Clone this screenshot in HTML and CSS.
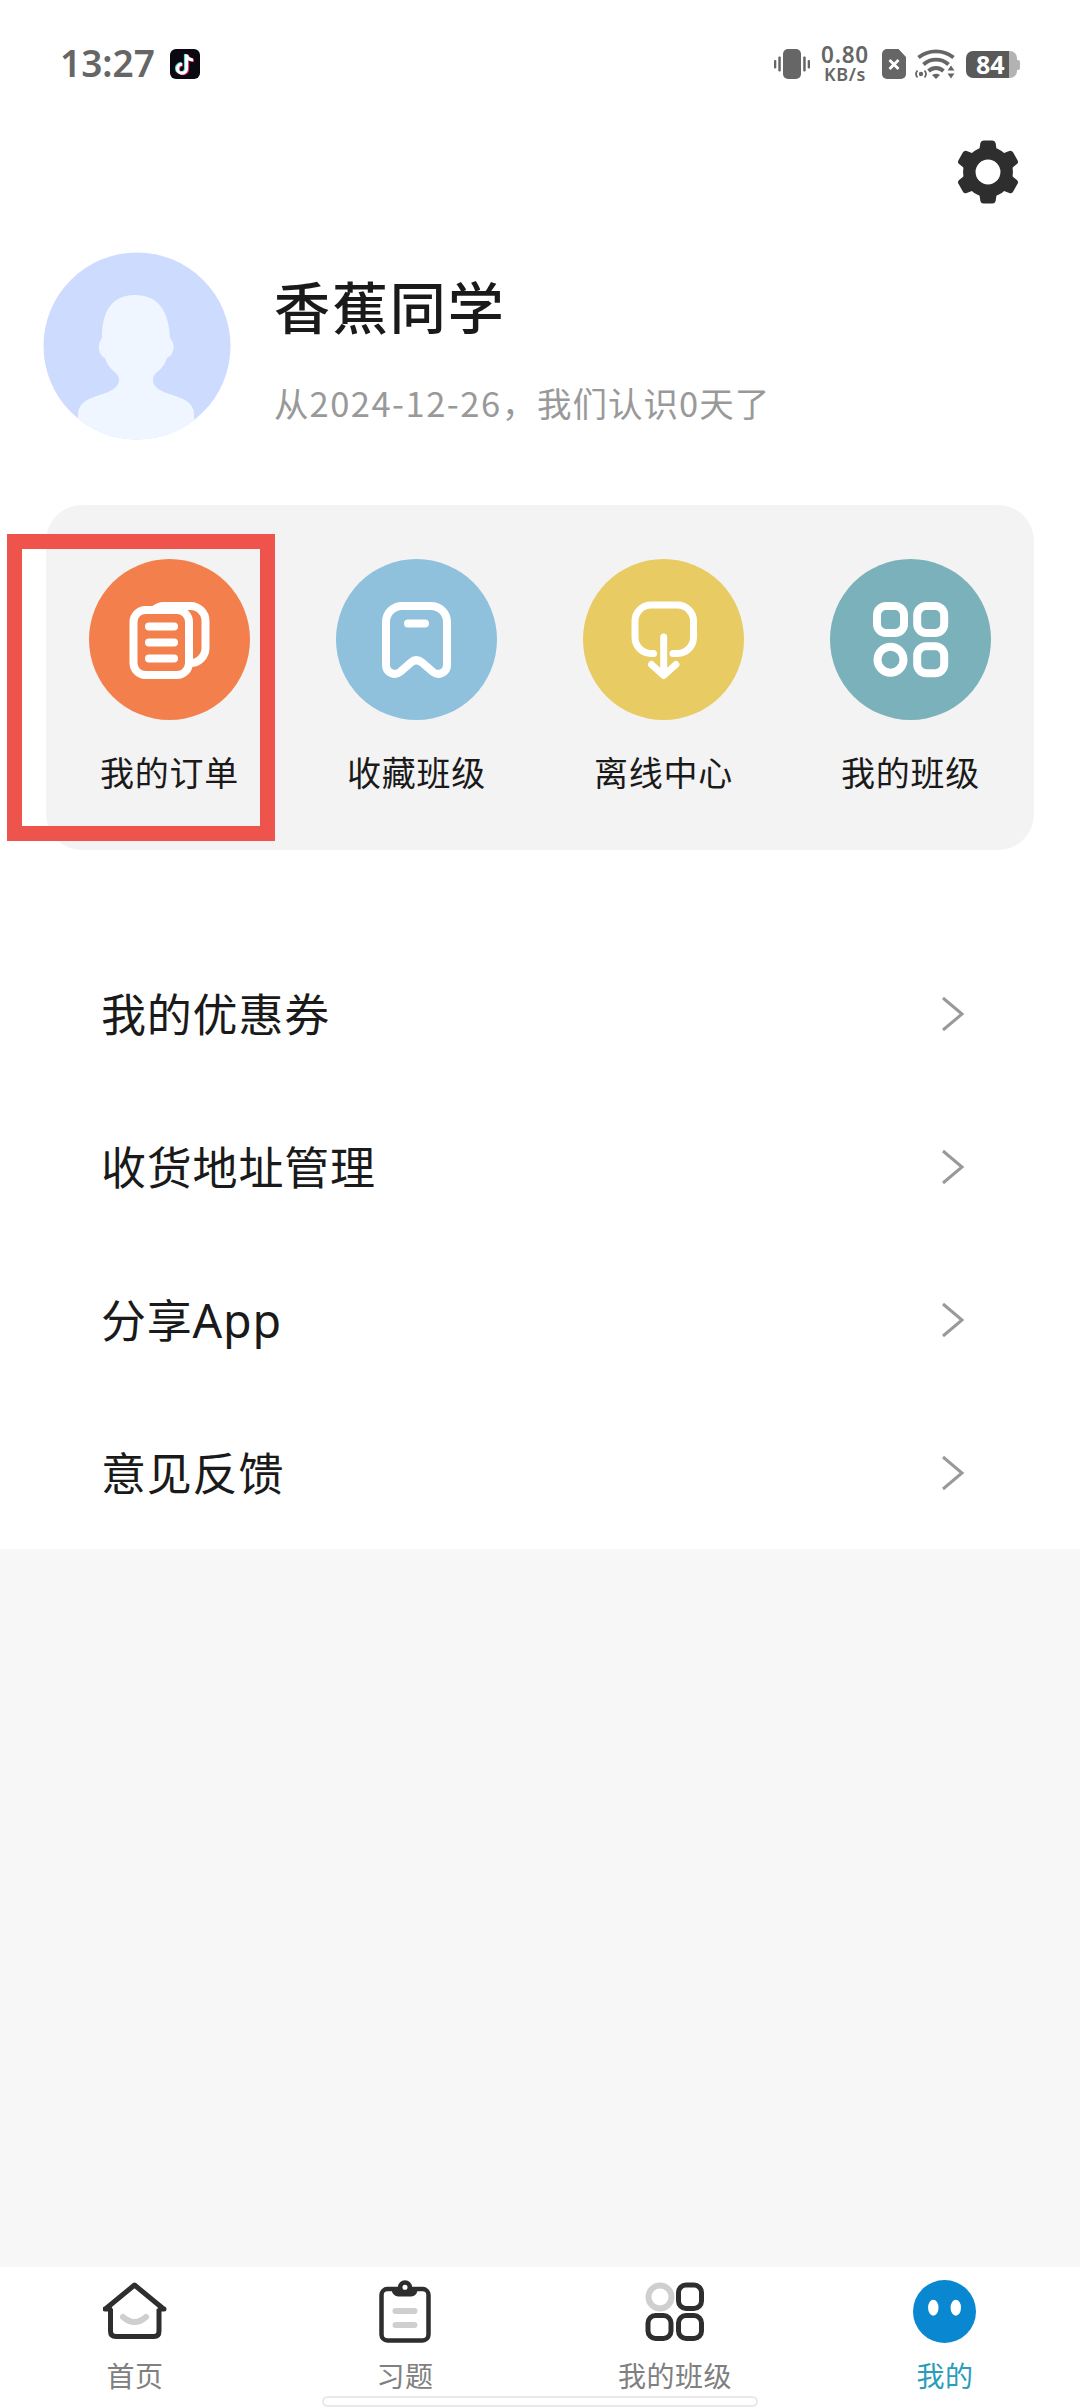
FILE: index.html
```html
<!DOCTYPE html>
<html lang="zh-CN">
<head>
<meta charset="utf-8">
<title>我的</title>
<link rel="stylesheet" href="styles.css">
</head>
<body>
<header class="status">
  <span class="clock">13:27</span>
  <svg class="app-badge" width="30" height="30" viewBox="0 0 30 30"><rect width="30" height="30" rx="6" fill="#0b0812"/><g fill="none" stroke-width="3.200"><path d="M15.500 5v14.200a4.500 4.500 0 1 1-4.500-4.500M15.500 5.500c.5 3 3 4.800 6.500 5" stroke="#2de5e2"/><path d="M17.500 6v14.200a4.500 4.500 0 1 1-4.500-4.500M17.500 6.500c.5 3 3 4.800 6.500 5" stroke="#f52b56"/><path d="M16.500 5.500v14.200a4.500 4.500 0 1 1-4.500-4.500M16.500 6c.5 3 3 4.800 6.500 5" stroke="#fff"/></g></svg>
  <div class="status-icons">
    <svg class="vibrate" width="36" height="30" viewBox="0 0 36 30" fill="#666"><rect x="9" width="18" height="30" rx="5"/><rect y="11" width="2.300" height="8.500" rx="1"/><rect x="4.300" y="7.500" width="2.500" height="15" rx="1"/><rect x="29.200" y="7.500" width="2.500" height="15" rx="1"/><rect x="33.700" y="11" width="2.300" height="8.500" rx="1"/></svg>
    <div class="speed"><span class="rate">0.80</span><span class="unit">KB/s</span></div>
    <svg class="sim" width="24" height="30" viewBox="0 0 24 30"><path d="M5 0h11.500L24 8v17a5 5 0 0 1-5 5H5a5 5 0 0 1-5-5V5a5 5 0 0 1 5-5z" fill="#666"/><path d="M7.500 11l9 9m0-9l-9 9" stroke="#fff" stroke-width="2.800"/></svg>
    <svg class="wifi" width="40" height="30" viewBox="0 0 40 30"><g fill="none" stroke="#666" stroke-width="3.800"><path d="M3.500 8.500c10-8.200 25-8.200 35 0"/><path d="M8.500 15.500c7-6.500 18-6.500 25 0"/><path d="M13.500 22c4.500-4 10.500-4 15 0"/></g><path d="M17 26q4.500-2.500 8 0l-4 4z" fill="#666"/><circle cx="6" cy="25" r="2.200" fill="#666"/><path d="M2.500 21.500q-3 3.500 0 7M9.500 21.500q3 3.500 0 7" fill="none" stroke="#666" stroke-width="1.800"/><path d="M32 23l4-8 4 8v7h-8z" fill="#fff"/><path d="M32.500 21.500l3.500-5 3.500 5zM32.500 24.500h7l-3.500 5z" fill="#666"/></svg>
    <div class="battery">84</div>
  </div>
</header>

<main class="profile">
  <div class="toolbar">
    <svg class="gear" width="60" height="64" viewBox="-30 -32 60 64"><g fill="#2e2e2e"><path id="tooth" d="M-9-20L-7.600-29Q-7-31.500-4.500-31.500h9Q7-31.500 7.600-29L9-20z"/><use href="#tooth" transform="rotate(60)"/><use href="#tooth" transform="rotate(120)"/><use href="#tooth" transform="rotate(180)"/><use href="#tooth" transform="rotate(240)"/><use href="#tooth" transform="rotate(300)"/></g><circle r="18.700" fill="none" stroke="#2e2e2e" stroke-width="12.500"/></svg>
  </div>

  <section class="user">
    <svg class="avatar" width="188" height="188" viewBox="0 0 188 188"><defs><clipPath id="disc"><circle cx="94" cy="94" r="93.500"/></clipPath></defs><circle cx="94" cy="94" r="93.500" fill="#cddbff"/><path clip-path="url(#disc)" fill="#f0f6ff" d="M35 190v-28c0-6 4-12 12-15.500 10-4.500 29-7 29-18.500 0-9-9-7-14-22-7-3-8-14-3-20 0-27 10-43 33-43s34 16 35 43c6 6 4 17-3 20-5 15-14 13-14 22 0 11.500 19 14 29 18.500 8 3.500 12 9.500 12 15.500v28z"/></svg>
    <div class="user-text">
      <h1 class="name">香蕉同学</h1>
      <p class="since">从<span class="date">2024-12-26</span>，我们认识0天了</p>
    </div>
  </section>

  <section class="actions">
    <a class="action highlighted">
      <svg class="disc orange" viewBox="0 0 161 161"><rect x="60" y="47" width="56.500" height="57" rx="15"/><rect class="cover" x="44.500" y="51" width="55.500" height="65" rx="12"/><path d="M60 67.500h25M60 83.500h25M60 99.500h25"/></svg>
      <span class="label">我的订单</span>
    </a>
    <a class="action">
      <svg class="disc blue" viewBox="0 0 161 161"><path d="M65 47h30a16 16 0 0 1 16 16v43c0 8-9 11-14 7l-11-9.500q-6-4.500-11 0L64 113c-5 4-14 1-14-7V63a16 16 0 0 1 16-16M72 64.500h17"/></svg>
      <span class="label">收藏班级</span>
    </a>
    <a class="action">
      <svg class="disc yellow" viewBox="0 0 161 161"><path d="M70.500 94.500H68a16 16 0 0 1-16-16V62a16 16 0 0 1 16-16h26.500a16 16 0 0 1 16 16v16.500a16 16 0 0 1-16 16H90M80.700 78v38M68.500 105.500l12.200 11 12.200-11" stroke-width="7"/></svg>
      <span class="label">离线中心</span>
    </a>
    <a class="action">
      <svg class="disc teal" viewBox="0 0 161 161"><rect x="47" y="47" width="27" height="27" rx="9"/><rect x="87.200" y="47" width="27" height="27" rx="9"/><circle cx="60.500" cy="100.700" r="13"/><rect x="87.200" y="87.200" width="27" height="27" rx="9"/></svg>
      <span class="label">我的班级</span>
    </a>
  </section>

  <nav class="menu">
    <a class="row"><span class="title">我的优惠券</span><svg class="chevron" viewBox="0 0 24 38"><path d="M2 3l19 16L2 35"/></svg></a>
    <a class="row"><span class="title">收货地址管理</span><svg class="chevron" viewBox="0 0 24 38"><path d="M2 3l19 16L2 35"/></svg></a>
    <a class="row"><span class="title">分享<span class="latin">App</span></span><svg class="chevron" viewBox="0 0 24 38"><path d="M2 3l19 16L2 35"/></svg></a>
    <a class="row"><span class="title">意见反馈</span><svg class="chevron" viewBox="0 0 24 38"><path d="M2 3l19 16L2 35"/></svg></a>
  </nav>
</main>

<footer class="tabs">
  <a class="tab">
    <svg class="tab-icon" viewBox="0 0 64 64"><path d="M7.500 29v22q0 5.500 5.500 5.500h38q5 0 5-5.500V29" stroke-width="5"/><path d="M3 28.500L31.500 5 60 28.500M2 29h5M57 29h4" stroke-width="5" stroke-linecap="round" stroke-linejoin="round"/><path class="soft" d="M20 37q11.500 10 23 0"/></svg>
    <span>首页</span>
  </a>
  <a class="tab">
    <svg class="tab-icon" viewBox="0 0 64 64"><rect x="8.500" y="9" width="47" height="51.500" rx="6" stroke-width="4.500"/><path d="M18.500 9h26q0 7-6 7.500H25q-6-.5-6.500-7.500z" fill="#2e2e2e" stroke="none"/><circle cx="32" cy="7.300" r="4.800" fill="#fff" stroke-width="4.500"/><path class="soft" d="M22.500 31h19M22.500 45h19"/></svg>
    <span>习题</span>
  </a>
  <a class="tab">
    <svg class="tab-icon" viewBox="0 0 64 64"><circle class="soft" cx="17" cy="17" r="11.500"/><rect x="35.500" y="5" width="23" height="23.500" rx="7.500"/><rect x="5" y="35.500" width="23" height="23" rx="7.500"/><rect x="35.500" y="35.500" width="23" height="23" rx="7.500"/></svg>
    <span>我的班级</span>
  </a>
  <a class="tab active">
    <svg class="tab-icon" viewBox="0 0 64 64"><g stroke="none"><circle cx="31.500" cy="31.500" r="31.500" fill="#0988d1"/><ellipse cx="20.300" cy="27.700" rx="5.200" ry="8" fill="#fff"/><ellipse cx="42.800" cy="27.700" rx="5.200" ry="8" fill="#fff"/></g></svg>
    <span>我的</span>
  </a>
  <div class="gesture-bar"></div>
</footer>
</body>
</html>
```
FILE: styles.css
```css
*, *::before, *::after { box-sizing: border-box; }
body {
  margin: 0;
  width: 1080px;
  height: 2408px;
  display: flex;
  flex-direction: column;
  background: #f7f7f7;
  color: #1a1a1a;
  font-family: "Noto Sans CJK SC", sans-serif;
}
svg { display: block; flex: none; }

.status {
  height: 128px;
  padding: 0 60px;
  display: flex;
  align-items: center;
  background: #fff;
  color: #666;
}
.clock {
  width: 110px;
  padding-bottom: 3px;
  font: 600 37px/1 "Noto Sans", sans-serif;
}
.status-icons { margin-left: auto; display: flex; align-items: center; }
.speed {
  margin: 0 12px 0 10px;
  width: 50px;
  display: flex;
  flex-direction: column;
  align-items: center;
  font-family: "Noto Sans", sans-serif;
  font-weight: 600;
}
.rate { font-size: 22.500px; line-height: 20px; letter-spacing: 0.800px; }
.unit { font-size: 18px; line-height: 18px; letter-spacing: 0.600px; }
.wifi { margin: 0 11px 0 9px; }
.battery {
  position: relative;
  width: 51px;
  height: 27px;
  border-radius: 7px;
  margin-right: 3px;
  background: linear-gradient(90deg, #595959 43px, #b3b3b3 43px);
  color: #fff;
  font: 700 25px/27px "Noto Sans", sans-serif;
  padding-left: 10px;
}
.battery::after {
  content: "";
  position: absolute;
  left: 51px;
  top: 9px;
  width: 3px;
  height: 10px;
  border-radius: 0 2px 2px 0;
  background: #b3b3b3;
}

.profile { height: 1421px; background: #fff; display: flex; flex-direction: column; }
.toolbar { height: 124px; padding: 12px 62px 0 0; display: flex; justify-content: flex-end; align-items: flex-start; }
.user { height: 253px; padding-left: 43px; display: flex; align-items: flex-start; }
.user-text { margin-left: 43px; }
.name {
  margin: 13px 0 0;
  font-size: 56px;
  font-weight: 500;
  line-height: 80px;
  letter-spacing: 1.900px;
}
.since { margin: 31px 0 0; font-size: 34.500px; line-height: 52px; color: #999; letter-spacing: 1px; }
.date { letter-spacing: 1.500px; }

.actions {
  width: 988px;
  height: 345px;
  margin: 0 46px;
  padding-top: 54px;
  border-radius: 36px;
  background: #f3f3f3;
  display: grid;
  grid-template-columns: repeat(4, 1fr);
}
.action { position: relative; display: flex; flex-direction: column; align-items: center; }
.highlighted::after {
  content: "";
  position: absolute;
  left: -39px;
  top: -25px;
  width: 268px;
  height: 307px;
  border: 15px solid #ef544c;
}
.disc {
  width: 161px;
  height: 161px;
  border-radius: 50%;
  fill: none;
  stroke: #fff;
  stroke-width: 8px;
  stroke-linecap: round;
  stroke-linejoin: round;
}
.orange { background: #f3804c; }
.orange .cover { fill: #f3804c; }
.blue { background: #8fc1dc; }
.yellow { background: #e8cb62; }
.teal { background: #7ab1ba; }
.label { margin-top: 27px; font-size: 34px; line-height: 50px; letter-spacing: 0.800px; }

.menu { margin-top: 87px; display: flex; flex-direction: column; }
.row {
  height: 153px;
  padding: 0 115px 0 101px;
  display: flex;
  align-items: center;
  justify-content: space-between;
  font-size: 45px;
  letter-spacing: 0.800px;
}
.title { padding-bottom: 2px; }
.latin { font-family: "Noto Sans", sans-serif; font-size: 46.500px; line-height: 1; }
.chevron { width: 24px; height: 38px; fill: none; stroke: #999; stroke-width: 3px; }

.tabs {
  position: relative;
  height: 141px;
  margin-top: auto;
  padding-top: 13px;
  background: #fff;
  display: grid;
  grid-template-columns: repeat(4, 270px);
}
.tab {
  display: flex;
  flex-direction: column;
  align-items: center;
  gap: 11px;
  font-size: 28px;
  line-height: 40px;
  letter-spacing: 0.500px;
  color: #808080;
}
.active { color: #2a9dbb; }
.tab-icon { width: 64px; height: 64px; fill: none; stroke: #2e2e2e; stroke-width: 5px; }
.soft { stroke: #cfcfcf; stroke-width: 6px; stroke-linecap: round; }
.gesture-bar {
  position: absolute;
  left: 322px;
  top: 129px;
  width: 436px;
  height: 11px;
  border: 2px solid #e9e9e9;
  border-radius: 6px;
  background: #fff;
}
```
